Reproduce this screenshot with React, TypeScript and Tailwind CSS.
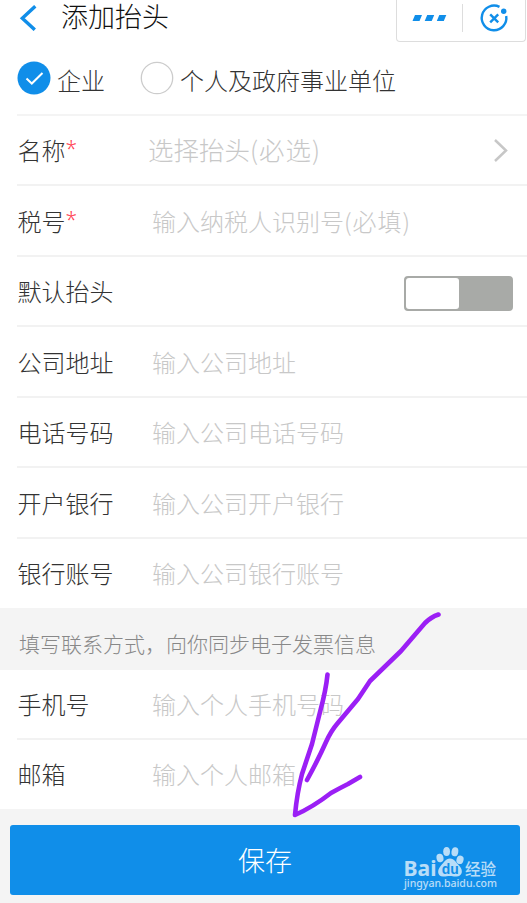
import React, { useState } from "react";
import { clsx } from "clsx";

interface FieldProps {
    label: string;
    placeholder?: string;
    hint?: string;
    required?: boolean;
    last?: boolean;
    className?: string;
    placeholderClass?: string;
    children?: React.ReactNode;
}

const Field: React.FC<FieldProps> = ({ label, placeholder, hint, required, last, className, placeholderClass, children }) => (
    <div className={clsx("ml-[17px] flex items-center", !last && "border-b-2 border-[#f2f2f2]", className)}>
        <div className="flex w-[135px] shrink-0 pl-[0.5px] text-2xl leading-8 text-[#333]">
            {label}
            {required && <span className="font-['Noto_Sans',sans-serif] text-[21px] leading-[29px] text-[#ff4050]">*</span>}
        </div>
        {placeholder && (
            <div className={clsx("leading-8 text-[#c8c8c8]", placeholderClass ?? "text-2xl")}>
                {placeholder}
                {hint && <span className="tracking-[1px]">{hint}</span>}
            </div>
        )}
        {children}
    </div>
);

const Watermark = () => (
    <div className="absolute right-[21px] top-[21px] h-[46px] w-[96px] opacity-70">
        <svg className="overflow-visible" width="96" height="46" viewBox="0 0 96 46" fill="#fff">
            <ellipse cx="37" cy="12" rx="3.500" ry="4.300" transform="rotate(-12 37 12)" />
            <ellipse cx="43.600" cy="5.500" rx="3.400" ry="4.500" />
            <ellipse cx="51.900" cy="5.800" rx="3.400" ry="4.500" transform="rotate(10 51.9 5.8)" />
            <ellipse cx="57" cy="13.800" rx="3.500" ry="4.300" transform="rotate(18 57 13.8)" />
            <path d="M47 12.500C51.500 12.500 53 16.500 56 19.500C61 24.500 59 30.500 53.500 30.500C50 30.600 49.500 30 47 30C44 30 43 30.600 40 30.500C34.500 30.300 33.500 24.500 38 19.500C41 16.500 42.500 12.500 47 12.500Z" />
            <text x=".5" y="29.500" fontSize="21" fontWeight="700" textLength="33" lengthAdjust="spacingAndGlyphs" fontFamily="Noto Sans, sans-serif">Bai</text>
            <text x="38.800" y="28.300" fontSize="14.500" fontWeight="600" fill="#108ee9" textLength="17" lengthAdjust="spacingAndGlyphs" fontFamily="Liberation Sans, sans-serif">du</text>
            <text x="62" y="28.500" fontSize="16" fontWeight="500" textLength="31" lengthAdjust="spacingAndGlyphs" fontFamily="Noto Sans CJK SC, sans-serif">经验</text>
            <text x="1" y="41" fontSize="10.500" fontWeight="500" textLength="93" lengthAdjust="spacingAndGlyphs" fontFamily="Noto Sans, sans-serif">jingyan.baidu.com</text>
        </svg>
    </div>
);

const App: React.FC = () => {
    const [type, setType] = useState<"company" | "personal">("company");

    return (
        <div className="relative h-[903px] w-[527px] overflow-hidden bg-[#f4f4f4] font-['Noto_Sans_CJK_SC',sans-serif] font-light">
            <div className="bg-white">
                {/* Header */}
                <div className="flex h-[43px] items-start">
                    <svg className="ml-[18px] mt-[5px]" width="20" height="26" viewBox="0 0 20 26" fill="none" stroke="#108ee9" strokeWidth="3.4">
                        <path d="M17.300 1.200L4.300 13.300L16.800 24.800" />
                    </svg>
                    <h1 className="ml-[23px] text-[27px] leading-[31px] text-[#111]">添加抬头</h1>
                    <div className="ml-auto mr-[1px] flex h-[42px] w-[130px] rounded-b-[4px] border border-t-0 border-[#ddd]">
                        <svg width="128" height="41" viewBox="0 0 128 41">
                            <g fill="#108ee9">
                                <path d="M18 15h7l-2.500 6h-7z" />
                                <path d="M30.200 15h7l-2.500 6h-7z" />
                                <path d="M42.300 15h7l-2.500 6h-7z" />
                                <circle cx="106.700" cy="11.300" r="2.700" />
                            </g>
                            <path d="M65.500 4v28" stroke="#ddd" />
                            <g fill="none" stroke="#108ee9" strokeWidth="2.400">
                                <path d="M102.500 6.900A12.300 12.300 0 1 0 109.200 16" />
                                <path d="M93.200 14.300l8 8M101.200 14.300l-8 8" />
                            </g>
                        </svg>
                    </div>
                </div>

                {/* Invoice type */}
                <div className="ml-[17px] flex h-[73px] items-start border-b-2 border-[#f4f4f4] text-2xl leading-9 text-[#333]">
                    <button className="flex items-start" onClick={() => setType("company")}>
                        <Radio checked={type === "company"} />
                        <span className="ml-[6px] mt-[19px]">企业</span>
                    </button>
                    <button className="ml-[35px] flex items-start" onClick={() => setType("personal")}>
                        <Radio checked={type === "personal"} />
                        <span className="ml-[6px] mt-[19px]">个人及政府事业单位</span>
                    </button>
                </div>

                <Field label="名称" placeholder="选择抬头" hint="(必选)" required className="h-[70px]" placeholderClass="-ml-[4px] -mt-[2px] text-[25.5px]">
                    <svg className="ml-auto mr-[18px]" width="16" height="24" viewBox="0 0 16 24" fill="none" stroke="#c7c7c7" strokeWidth="2.500">
                        <path d="M2 2L13 12.500L2 23" />
                    </svg>
                </Field>
                <Field label="税号" placeholder="输入纳税人识别号" hint="(必填)" required className="h-[71px]" />
                <Field label="默认抬头" className="h-[70px]">
                    <div className="ml-auto mr-[14px] mt-[4px] flex h-[35px] w-[109px] rounded-[4px] border-2 border-[#a8aaa7] bg-[#a8aaa7]">
                        <div className="w-[53px] rounded-[3px] bg-white" />
                    </div>
                </Field>
                <Field label="公司地址" placeholder="输入公司地址" className="h-[71px]" />
                <Field label="电话号码" placeholder="输入公司电话号码" className="h-[70px]" />
                <Field label="开户银行" placeholder="输入公司开户银行" className="h-[71px]" />
                <Field label="银行账号" placeholder="输入公司银行账号" last className="h-[69px] pb-[2px]" />
            </div>

            <div className="flex h-[62px] items-center pl-[19px] pt-[9px] text-[21px] text-[#888]">
                填写联系方式，向你同步电子发票信息
            </div>

            {/* Contact */}
            <div className="bg-white">
                <Field label="手机号" placeholder="输入个人手机号码" className="h-[70px]" />
                <Field label="邮箱" placeholder="输入个人邮箱" last className="h-[69px] pb-[1px]" />
            </div>

            <div className="relative ml-[10px] mt-[16px] h-[70px] w-[510px]">
                <button className="h-full w-full rounded-[3px] bg-[#108ee9] text-[27px] text-white">保存</button>
                <Watermark />
            </div>

            {/* Hand-drawn arrow pointing at the save button */}
            <svg className="pointer-events-none absolute left-0 top-0" width="527" height="903" viewBox="0 0 527 903" fill="none" stroke="#9b1ff5" strokeWidth="4.600" strokeLinecap="round" strokeLinejoin="round">
                <path d="M438.500 614.500Q431 617 425 623L401 651L370 681Q364 690 358 699L337 724Q331 731 326 742Q318 760 307 780" />
                <path d="M327.500 674.500Q326 690 320 712L312 744L302 774Q297 793 295 815Q313 807 331 793Q340 788 348 784L360 777" />
            </svg>
        </div>
    );
};

const Radio = ({ checked }: { checked: boolean }) => (
    <svg className="mt-[18px]" width="34" height="34" viewBox="0 0 34 34" fill="none">
        {checked ? (
            <>
                <circle cx="17" cy="17" r="16.500" fill="#108ee9" />
                <path d="M9.500 17.500L14.800 22.500L25.500 12" stroke="#fff" strokeWidth="2" />
            </>
        ) : (
            <circle cx="17" cy="17" r="15.700" stroke="#ccc" strokeWidth="1.300" />
        )}
    </svg>
);

export default App;
